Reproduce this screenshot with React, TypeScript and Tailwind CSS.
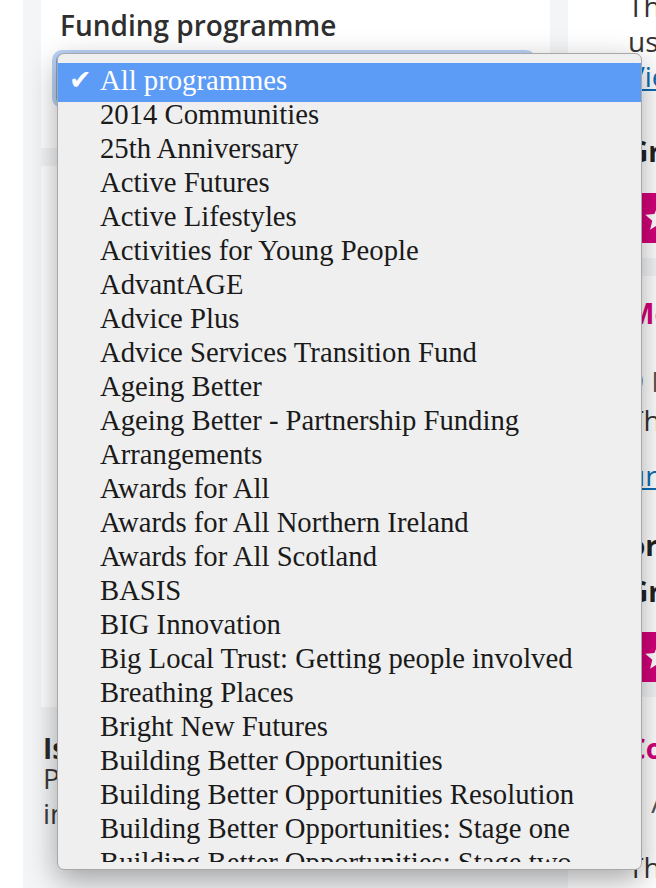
const programmes = [
  "2014 Communities",
  "25th Anniversary",
  "Active Futures",
  "Active Lifestyles",
  "Activities for Young People",
  "AdvantAGE",
  "Advice Plus",
  "Advice Services Transition Fund",
  "Ageing Better",
  "Ageing Better - Partnership Funding",
  "Arrangements",
  "Awards for All",
  "Awards for All Northern Ireland",
  "Awards for All Scotland",
  "BASIS",
  "BIG Innovation",
  "Big Local Trust: Getting people involved",
  "Breathing Places",
  "Bright New Futures",
  "Building Better Opportunities",
  "Building Better Opportunities Resolution",
  "Building Better Opportunities: Stage one",
  "Building Better Opportunities: Stage two",
  "Building Connections Fund",
];

function Star() {
  return (
    <svg width="30" height="30" viewBox="0 0 24 24" fill="#ffffff">
      <path d="M12 1.8l2.9 6.9 7.3.6-5.6 4.8 1.7 7.2L12 17.4l-6.3 3.9 1.7-7.2-5.6-4.8 7.3-.6z" />
    </svg>
  );
}

function StarButton() {
  return (
    <div className="flex h-[50px] w-[60px] items-center bg-[#d4007a] pl-[15px]">
      <Star />
    </div>
  );
}

export default function App() {
  return (
    <div
      className="relative flex h-[888px] w-[656px] overflow-hidden bg-white text-[#333333]"
      style={{ fontFamily: '"Open Sans", "Liberation Sans", sans-serif' }}
    >
      <div className="w-[23px] shrink-0 bg-white" />

      <div className="flex flex-1 gap-[18px] bg-[#f4f5f7] pl-[18px]">
        {/* Left column: filters */}
        <div className="flex w-[509px] shrink-0 flex-col">
          <div className="h-[148px] bg-white px-[19px] pt-[6px]">
            <div className="text-[28px] font-semibold leading-[38px] text-[#2f2f2f]">
              Funding programme
            </div>
            <div className="mt-[10px] ml-[-4px] h-[50px] w-[476px] rounded-[6px] border border-[#7aa7e6] bg-white ring-4 ring-[#9cc2f2]/70" />
          </div>

          <div className="mt-[18px] h-[541px] bg-white" />

          <div className="whitespace-nowrap pl-[2px] pt-[28px]">
            <div className="text-[28px] font-bold leading-[26px] text-[#2a2a2a]">
              Is this the right funding for you?
            </div>
            <div className="text-[28px] leading-[35px] text-[#3a3a3a]">
              <div>Please read our guidance notes</div>
              <div>including eligibility rules.</div>
            </div>
          </div>
        </div>

        {/* Right column: results */}
        <div className="flex w-[460px] shrink-0 flex-col whitespace-nowrap">
          <div className="h-[272px] bg-white pl-[60px]">
            <div className="-mt-[11px] text-[28px] leading-[35px]">
              <div>The project will support young</div>
              <div>users across the community.</div>
              <div className="text-[#0b6db3] underline">View project</div>
            </div>
            <div className="mt-[40px] text-[28px] font-bold leading-[35px] text-[#222]">
              Grant programme
            </div>
            <div className="mt-[24px]">
              <StarButton />
            </div>
          </div>

          <div className="mt-[18px] h-[425px] bg-white pl-[60px] pt-[20px]">
            <div className="text-[28px] font-bold leading-[35px] text-[#d4007a]">
              Men's Shed Association
            </div>
            <div className="mt-[33px] text-[28px] leading-[35px] text-[#555]">
              9 March 2017 · £9,850
            </div>
            <div className="mt-[4px] text-[28px] leading-[35px]">
              The group will run weekly sessions
            </div>
            <div className="mt-[20px] text-[28px] leading-[35px] text-[#0b6db3] underline">
              url for the project
            </div>
            <div className="mt-[35px] text-[28px] font-bold leading-[35px] text-[#222]">
              organisation
            </div>
            <div className="mt-[11px] text-[28px] font-bold leading-[35px] text-[#222]">
              Grant programme
            </div>
            <div className="mt-[23px]">
              <StarButton />
            </div>
          </div>

          <div className="mt-[15px] h-[200px] bg-white pl-[60px] pt-[34px]">
            <div className="text-[28px] font-bold leading-[35px] text-[#d4007a]">
              Community Hub
            </div>
            <div className="mt-[19px] text-[28px] leading-[35px] text-[#555]">
              1 April 2017 · £10,000
            </div>
            <div className="mt-[30px] text-[28px] leading-[35px]">
              The hub will offer advice
            </div>
          </div>
        </div>
      </div>

      {/* Native select popup */}
      <div className="absolute left-[57px] top-[53px] h-[817px] w-[585px] rounded-[7px] border border-[#a8a8a8] bg-[#efefef] pt-[9px] shadow-[0_10px_30px_rgba(0,0,0,0.35)]">
        <div
          className="h-[799px] overflow-hidden text-[28.7px] text-[#1a1a1a]"
          style={{ fontFamily: '"Liberation Serif", "Times New Roman", serif' }}
        >
          <div className="relative h-[34px] bg-[#5c9bf6] pl-[42px] leading-[34px] text-white shadow-[0_5px_0_0_#5c9bf6]">
            <span
              className="absolute left-[11px] top-[0px] text-[27px]"
              style={{ fontFamily: '"DejaVu Sans", sans-serif' }}
            >
              ✔
            </span>
            All programmes
          </div>
          {programmes.map((p) => (
            <div key={p} className="h-[34px] whitespace-nowrap pl-[42px] leading-[34px]">
              {p}
            </div>
          ))}
        </div>
      </div>
    </div>
  );
}
